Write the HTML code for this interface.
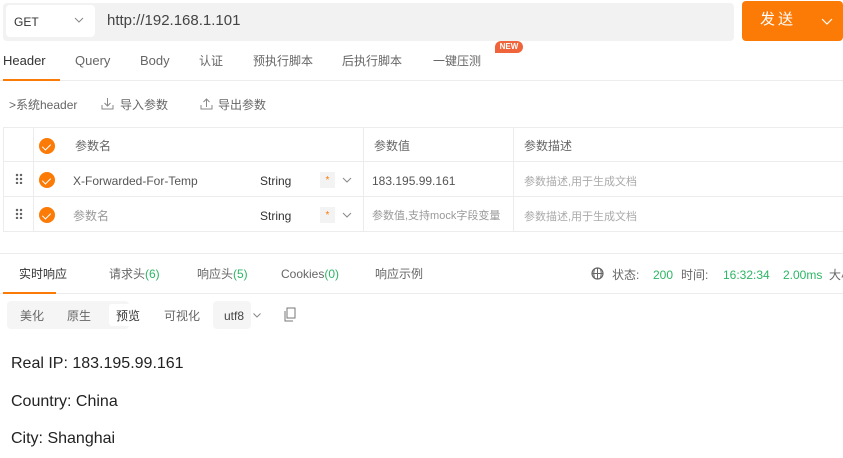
<!DOCTYPE html>
<html><head><meta charset="utf-8"><style>
*{margin:0;padding:0;box-sizing:border-box}
body{width:843px;height:458px;overflow:hidden;background:#fff;font-family:"Liberation Sans","Noto Sans CJK SC",sans-serif;color:#333;position:relative}
.a{position:absolute;white-space:nowrap;line-height:16px}
.f12{font-size:12px}.f13{font-size:13px}
.g{color:#666}.lg{color:#999}.gr{color:#2db565}
.chk{position:absolute;width:16px;height:16px;border-radius:50%;background:#fc7a06}
.chk:after{content:"";position:absolute;left:5px;top:3.5px;width:4px;height:7px;border:solid #fff;border-width:0 1.3px 1.3px 0;transform:rotate(45deg)}
.hl{position:absolute;height:1px;background:#ececec}
.vl{position:absolute;width:1px;background:#ececec}
.dots{position:absolute;width:8px;height:11px;background:radial-gradient(circle,#666 1.1px,transparent 1.4px) 0 0/4px 4px}
.star{position:absolute;width:15px;height:16px;background:#f3f3f3;color:#fc7a06;font-size:10px;text-align:center;line-height:17px}
</style></head><body>
<div class="a" style="left:3px;top:3px;width:731px;height:38px;background:#f2f2f2;border-radius:4px"></div>
<div class="a" style="left:6px;top:5px;width:89px;height:32px;background:#fff;border-radius:4px"></div>
<div class="a f12" style="left:14px;top:14px">GET</div>
<svg class="a" style="left:74px;top:17px" width="10" height="6"><path d="M1 1l4 4 4-4" fill="none" stroke="#888"/></svg>
<div class="a" style="left:107px;top:13px;font-size:15px;color:#444">http://192.168.1.101</div>
<div class="a" style="left:742px;top:1px;width:101px;height:40px;background:#fc7a06;border-radius:4px"></div>
<div class="a" style="left:760px;top:12px;font-size:15px;color:#fff;letter-spacing:3px">发送</div>
<svg class="a" style="left:821px;top:18px" width="12" height="7"><path d="M1 1l5 5 5-5" fill="none" stroke="#fff" stroke-width="1.2"/></svg>

<div class="a f13" style="left:3px;top:53px">Header</div>
<div class="a f13 g" style="left:75px;top:53px">Query</div>
<div class="a f13 g" style="left:140px;top:53px">Body</div>
<div class="a f12 g" style="left:199px;top:53px">认证</div>
<div class="a f12 g" style="left:253px;top:53px">预执行脚本</div>
<div class="a f12 g" style="left:342px;top:53px">后执行脚本</div>
<div class="a f12 g" style="left:433px;top:53px">一键压测</div>
<div class="a" style="left:495px;top:41px;width:28px;height:12px;background:#f0643c;border-radius:6px 6px 6px 0;color:#fff;font-size:8px;font-weight:bold;text-align:center;line-height:12px">NEW</div>
<div class="hl" style="left:0;top:80px;width:843px"></div>
<div class="a" style="left:3px;top:79px;width:57px;height:2px;background:#fc7a06"></div>

<div class="a f12 g" style="left:9px;top:97px">&gt;系统header</div>
<svg class="a" style="left:101px;top:97px" width="13" height="13"><path d="M6.5 1v8M3.5 6l3 3 3-3M1 8v4h11V8" fill="none" stroke="#888"/></svg>
<div class="a f12 g" style="left:120px;top:97px">导入参数</div>
<svg class="a" style="left:200px;top:97px" width="13" height="13"><path d="M6.5 10V2M3.5 5l3-3 3 3M1 8v4h11V8" fill="none" stroke="#888"/></svg>
<div class="a f12 g" style="left:218px;top:97px">导出参数</div>

<div class="hl" style="left:3px;top:127px;width:840px"></div>
<div class="hl" style="left:3px;top:161px;width:840px"></div>
<div class="hl" style="left:3px;top:196px;width:840px"></div>
<div class="hl" style="left:3px;top:231px;width:840px"></div>
<div class="vl" style="left:3px;top:127px;height:104px"></div>
<div class="vl" style="left:33px;top:127px;height:104px"></div>
<div class="vl" style="left:363px;top:127px;height:104px"></div>
<div class="vl" style="left:513px;top:127px;height:104px"></div>
<div class="chk" style="left:39px;top:138px"></div>
<div class="a f12 g" style="left:75px;top:138px">参数名</div>
<div class="a f12 g" style="left:374px;top:138px">参数值</div>
<div class="a f12 g" style="left:524px;top:138px">参数描述</div>
<div class="dots" style="left:15px;top:173px"></div>
<div class="chk" style="left:39px;top:172px"></div>
<div class="a f12" style="left:73px;top:173px;color:#555">X-Forwarded-For-Temp</div>
<div class="a f12" style="left:260px;top:173px">String</div>
<div class="star" style="left:320px;top:172px">*</div>
<svg class="a" style="left:342px;top:177px" width="10" height="6"><path d="M1 1l4 4 4-4" fill="none" stroke="#888"/></svg>
<div class="a f12" style="left:372px;top:173px;color:#555">183.195.99.161</div>
<div class="a" style="left:524px;top:174px;font-size:11px;color:#aaa">参数描述,用于生成文档</div>
<div class="dots" style="left:15px;top:208px"></div>
<div class="chk" style="left:39px;top:207px"></div>
<div class="a f12 lg" style="left:73px;top:208px">参数名</div>
<div class="a f12" style="left:260px;top:208px">String</div>
<div class="star" style="left:320px;top:207px">*</div>
<svg class="a" style="left:342px;top:212px" width="10" height="6"><path d="M1 1l4 4 4-4" fill="none" stroke="#888"/></svg>
<div class="a" style="left:372px;top:208px;font-size:11px;color:#999;width:140px;overflow:hidden">参数值,支持mock字段变量</div>
<div class="a" style="left:524px;top:209px;font-size:11px;color:#aaa">参数描述,用于生成文档</div>

<div class="hl" style="left:0;top:253px;width:843px"></div>
<div class="a f12" style="left:19px;top:266px">实时响应</div>
<div class="a f12 g" style="left:109px;top:266px">请求头<span class="gr">(6)</span></div>
<div class="a f12 g" style="left:197px;top:266px">响应头<span class="gr">(5)</span></div>
<div class="a f12 g" style="left:281px;top:266px">Cookies<span class="gr">(0)</span></div>
<div class="a f12 g" style="left:375px;top:266px">响应示例</div>
<div class="hl" style="left:0;top:293px;width:843px"></div>
<div class="a" style="left:3px;top:292px;width:53px;height:2px;background:#fc7a06"></div>
<svg class="a" style="left:591px;top:267px" width="13" height="13"><circle cx="6.5" cy="6.5" r="5.5" fill="none" stroke="#666" stroke-width="1.2"/><path d="M1 6.5h11M6.5 1v11M3.5 2.5q-1.5 4 0 8M9.5 2.5q1.5 4 0 8" fill="none" stroke="#666"/></svg>
<div class="a f12 g" style="left:612px;top:267px">状态:</div>
<div class="a f12 gr" style="left:653px;top:267px">200</div>
<div class="a f12 g" style="left:681px;top:267px">时间:</div>
<div class="a f12 gr" style="left:723px;top:267px">16:32:34</div>
<div class="a f12 gr" style="left:783px;top:267px">2.00ms</div>
<div class="a f12 g" style="left:829px;top:267px">大小</div>

<div class="a" style="left:7px;top:301px;width:122px;height:28px;background:#f5f5f5;border-radius:4px"></div>
<div class="a f12 g" style="left:20px;top:308px">美化</div>
<div class="a f12 g" style="left:67px;top:308px">原生</div>
<div class="a" style="left:109px;top:304px;width:38px;height:22px;background:#fff;border-radius:3px"></div>
<div class="a f12" style="left:116px;top:308px">预览</div>
<div class="a f12 g" style="left:164px;top:308px">可视化</div>
<div class="a" style="left:213px;top:301px;width:38px;height:28px;background:#f5f5f5;border-radius:4px"></div>
<div class="a f12" style="left:224px;top:308px;color:#444">utf8</div>
<svg class="a" style="left:253px;top:313px" width="8" height="5"><path d="M.5.5l3.5 3.5 3.5-3.5" fill="none" stroke="#888"/></svg>
<svg class="a" style="left:284px;top:307px" width="12" height="15"><path d="M3 1h8v10H3zM1 4v10h8" fill="none" stroke="#777"/></svg>
<div class="a" style="left:11px;top:355px;font-size:16px;line-height:18px;color:#222">Real IP: 183.195.99.161</div>
<div class="a" style="left:11px;top:393px;font-size:16px;line-height:18px;color:#222">Country: China</div>
<div class="a" style="left:11px;top:430px;font-size:16px;line-height:18px;color:#222">City: Shanghai</div>
</body></html>
